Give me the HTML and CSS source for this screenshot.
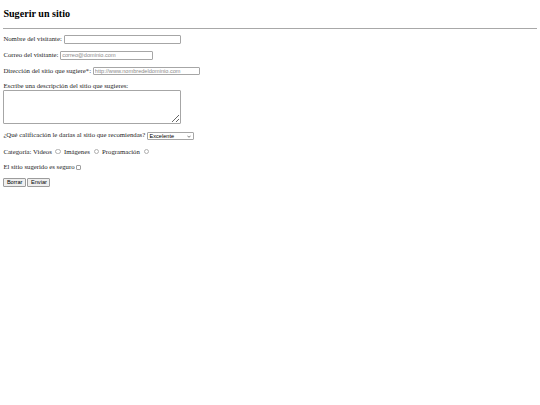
FILE: index.html
```html
<!DOCTYPE html>
<html lang="es">
<head>
<meta charset="utf-8">
<title>Sugerir un sitio</title>
<link rel="stylesheet" href="styles.css">
</head>
<body>
<h2 class="title">Sugerir un sitio</h2>
<hr class="rule">
<form class="form">
  <p class="row">Nombre del visitante: <input class="field field-name" type="text"></p>
  <p class="row">Correo del visitante: <input class="field field-mail" type="email" placeholder="correo@dominio.com"></p>
  <p class="row">Dirección del sitio que sugiere*: <input class="field field-url" type="url" placeholder="http://www.nombredeldominio.com"></p>
  <p class="row">Escribe una descripción del sitio que sugieres:<br><textarea class="area" cols="50" rows="5"></textarea></p>
  <p class="row">¿Qué calificación le darías al sitio que recomiendas? <span class="pick-wrap"><select class="pick"><option>Excelente</option><option>Bueno</option><option>Regular</option><option>Malo</option></select><svg class="chev" viewBox="0 0 10 6" width="4" height="3"><path d="M1 1l4 4 4-4" fill="none" stroke="#333" stroke-width="1.6"/></svg></span></p>
  <p class="row row-opt">Categoría: Videos <input class="radio" type="radio" name="cat"> Imágenes <input class="radio" type="radio" name="cat"> Programación <input class="radio" type="radio" name="cat"></p>
  <p class="row row-opt">El sitio sugerido es seguro<input class="check" type="checkbox"></p>
  <div class="actions"><input class="btn" type="reset" value="Borrar"> <input class="btn" type="submit" value="Enviar"></div>
</form>
</body>
</html>
```

FILE: styles.css
```css
html {
  background: #fff;
}
body {
  margin: 0 3.375px 3.375px;
  padding-top: 0.1px;
  font-family: "Liberation Serif", "Times New Roman", serif;
  font-size: 6.75px;
  color: #1c1c1c;
}
.title {
  font-size: 10.125px;
  font-weight: bold;
  color: #000;
  margin: 8.3px 0;
}
.rule {
  margin: 3.375px 0;
  height: 0;
  border: 0;
  border-top: 1px solid #a8a8a8;
}
.row {
  margin: 6.75px 0;
}
.row-opt {
  line-height: 9px;
}
.field,
.pick,
.btn {
  font-family: "Liberation Sans", Arial, sans-serif;
  font-size: 5.625px;
}
.field {
  box-sizing: border-box;
  height: 8.8px;
  padding: 0 1px;
  border: 1px solid #a6a6a6;
  border-radius: 1px;
  vertical-align: middle;
  background: #fff;
}
.field::placeholder {
  color: #8a8a8a;
}
.field-name { width: 117px; }
.field-mail { width: 93px; }
.field-url { width: 107px; }
.area {
  box-sizing: border-box;
  width: 178px;
  height: 34px;
  margin-top: 0.5px;
  border: 1px solid #a6a6a6;
  border-radius: 1px;
  font-size: 5.625px;
  vertical-align: baseline;
}
.pick-wrap {
  position: relative;
  display: inline-block;
  vertical-align: middle;
}
.pick {
  appearance: none;
  -webkit-appearance: none;
  box-sizing: border-box;
  display: block;
  width: 47px;
  height: 8px;
  padding: 0 0 0 1.5px;
  border: 1px solid #a6a6a6;
  border-radius: 1px;
  background: #fff;
  color: #000;
  line-height: 6px;
}
.chev {
  position: absolute;
  right: 3px;
  top: 2.6px;
}
.radio,
.check {
  appearance: none;
  -webkit-appearance: none;
  box-sizing: border-box;
  width: 5.5px;
  height: 5.5px;
  margin: 0 1.3px 0 2px;
  vertical-align: -0.6px;
  background: #fff;
}
.radio {
  border: 1px solid #b0b0b0;
  border-radius: 50%;
}
.check {
  margin-left: 1px;
  border: 1px solid #a0a0a0;
  border-radius: 1px;
}
.actions {
  display: flex;
  gap: 1.5px;
}
.btn {
  appearance: none;
  -webkit-appearance: none;
  height: 8.5px;
  padding: 0 2.5px;
  border: 1px solid #9c9c9c;
  border-radius: 1px;
  background: #efefef;
  color: #000;
  line-height: 6px;
}
```
